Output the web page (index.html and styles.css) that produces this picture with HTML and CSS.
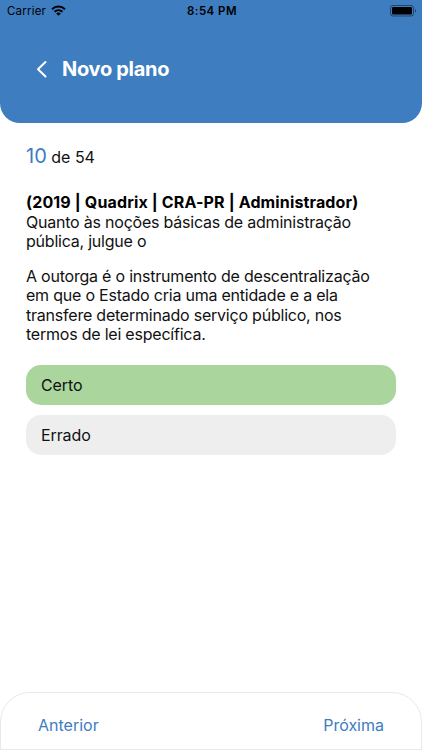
FILE: index.html
```html
<!DOCTYPE html>
<html lang="pt-BR">
<head>
    <meta charset="UTF-8">
    <meta name="viewport" content="width=device-width, initial-scale=1.0">
    <title>Novo plano</title>
    <link rel="stylesheet" href="styles.css">
</head>
<body>
    <header class="header">
        <!-- Status bar -->
        <div class="status-bar">
            <div class="carrier">
                <span>Carrier</span>
                <svg class="wifi" width="15" height="11" viewBox="0 0 15 11" fill="none" stroke="#000" stroke-width="2">
                    <path d="M1 4.2C4.7 .6 10.3 .6 14 4.2"/>
                    <path d="M3.5 6.8C5.8 4.7 9.2 4.7 11.5 6.8"/>
                    <path d="M7.5 10.7L5.2 8.4C6.5 7.2 8.5 7.2 9.8 8.4Z" fill="#000" stroke="none"/>
                </svg>
            </div>
            <span class="time">8:54 PM</span>
            <svg class="battery" width="27" height="12" viewBox="0 0 27 12">
                <rect x=".5" y=".5" width="23" height="10.5" rx="2.5" fill="none" stroke="#000" stroke-opacity=".45"/>
                <rect x="2" y="2" width="20" height="7.5" rx="1.2"/>
                <path d="M25 4C26.5 4.5 26.5 7.2 25 7.7Z" fill-opacity=".45"/>
            </svg>
        </div>

        <!-- Title -->
        <div class="title-bar">
            <svg class="back" width="12" height="18" viewBox="0 0 12 18" fill="none" stroke="#fff" stroke-width="2" stroke-linecap="round" stroke-linejoin="round">
                <path d="M9.5 2L2 9.2L9.5 16.5"/>
            </svg>
            <h1>Novo plano</h1>
        </div>
    </header>

    <main class="content">
        <p class="counter"><span class="current">10</span> de 54</p>

        <!-- Question -->
        <div class="question">
            <p><b>(2019 | Quadrix | CRA-PR | Administrador)</b><br>
            Quanto às noções básicas de administração<br>
            pública, julgue o</p>
            <p>A outorga é o instrumento de descentralização<br>
            em que o Estado cria uma entidade e a ela<br>
            transfere determinado serviço público, nos<br>
            termos de lei específica.</p>
        </div>

        <!-- Answers -->
        <div class="answers">
            <button type="button" class="answer selected">Certo</button>
            <button type="button" class="answer">Errado</button>
        </div>
    </main>

    <nav class="footer">
        <a class="previous">Anterior</a>
        <a class="next">Próxima</a>
    </nav>
</body>
</html>
```

FILE: styles.css
```css
* {
    box-sizing: border-box;
}

body {
    margin: 0;
    height: 100vh;
    display: flex;
    flex-direction: column;
    background-color: #fff;
    color: #111;
    font-family: Inter, "Liberation Sans", sans-serif;
    font-size: 16px;
    overflow: hidden;
}

h1, p {
    margin: 0;
    white-space: nowrap;
}

/* Header */
.header {
    height: 122.5px;
    background-color: #3d7dc0;
    border-radius: 0 0 20px 20px;
}

.status-bar {
    display: grid;
    grid-template-columns: 1fr auto 1fr;
    align-items: center;
    height: 22px;
    padding: 0 5px 0 7px;
    color: #000;
    font-size: 11.5px;
    line-height: 22px;
}

.carrier {
    display: flex;
    align-items: center;
    gap: 5px;
    letter-spacing: 0.2px;
}

.wifi {
    margin-top: -2px;
}

.time {
    font-weight: 600;
    letter-spacing: 0.45px;
}

.battery {
    justify-self: end;
    margin-top: -1px;
}

.title-bar {
    display: flex;
    align-items: center;
    gap: 14px;
    margin-top: 35px;
    padding-left: 36px;
    height: 24px;
    color: #fff;
}

.title-bar h1 {
    font-size: 20px;
    font-weight: 700;
    line-height: 24px;
    letter-spacing: -0.3px;
}

/* Question */
.content {
    flex: 1;
    padding: 21.5px 26px 0;
}

.counter {
    line-height: 24px;
}

.current {
    color: #3d7dc0;
    font-size: 20px;
}

.question {
    margin-top: 24px;
    line-height: 19.5px;
    letter-spacing: -0.22px;
}

.question p + p {
    margin-top: 15px;
}

.question b {
    color: #000;
    letter-spacing: 0.14px;
}

/* Answers */
.answers {
    display: flex;
    flex-direction: column;
    gap: 10.5px;
    margin-top: 20px;
}

.answer {
    height: 40px;
    padding: 0 15px;
    border: 0;
    border-radius: 15px;
    background-color: #eee;
    color: #111;
    font: inherit;
    letter-spacing: -0.1px;
    text-align: left;
}

.answer.selected {
    background-color: #aad59d;
}

/* Bottom navigation */
.footer {
    display: flex;
    justify-content: space-between;
    align-items: center;
    height: 58px;
    padding: 8px 37px 0;
    border: 1px solid #e9e9e9;
    border-radius: 30px 30px 0 0;
    color: #3d7dc0;
}
```
